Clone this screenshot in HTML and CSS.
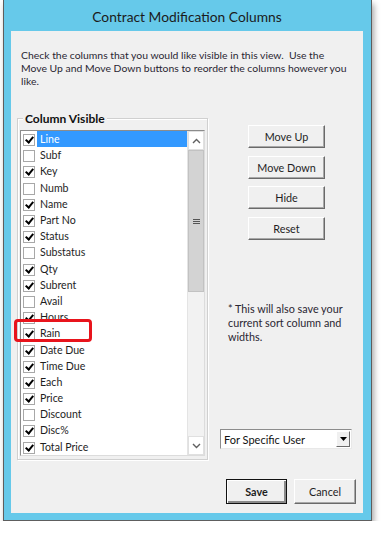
FILE: index.html
```html
<!DOCTYPE html>
<html>
<head>
<title>Contract Modification Columns</title>
<link rel="stylesheet" href="styles.css">
</head>
<body>
<div class="window">
  <div class="titlebar">Contract Modification Columns</div>
  <div class="content">
    <p class="desc">Check the columns that you would like visible in this view.&nbsp; Use the<br>Move Up and Move Down buttons to reorder the columns however you<br>like.</p>
    <div class="main">
      <div class="group">
        <span class="group-title">Column Visible</span>
        <div class="listbox">
          <div class="rows">
            <div class="row"><span class="cb on"></span><span class="label selected">Line</span></div>
            <div class="row"><span class="cb"></span><span class="label">Subf</span></div>
            <div class="row"><span class="cb on"></span><span class="label">Key</span></div>
            <div class="row"><span class="cb"></span><span class="label">Numb</span></div>
            <div class="row"><span class="cb on"></span><span class="label">Name</span></div>
            <div class="row"><span class="cb on"></span><span class="label">Part No</span></div>
            <div class="row"><span class="cb on"></span><span class="label">Status</span></div>
            <div class="row"><span class="cb"></span><span class="label">Substatus</span></div>
            <div class="row"><span class="cb on"></span><span class="label">Qty</span></div>
            <div class="row"><span class="cb on"></span><span class="label">Subrent</span></div>
            <div class="row"><span class="cb"></span><span class="label">Avail</span></div>
            <div class="row"><span class="cb on"></span><span class="label">Hours</span></div>
            <div class="row marked"><span class="cb on"></span><span class="label">Rain</span></div>
            <div class="row"><span class="cb on"></span><span class="label">Date Due</span></div>
            <div class="row"><span class="cb on"></span><span class="label">Time Due</span></div>
            <div class="row"><span class="cb on"></span><span class="label">Each</span></div>
            <div class="row"><span class="cb on"></span><span class="label">Price</span></div>
            <div class="row"><span class="cb"></span><span class="label">Discount</span></div>
            <div class="row"><span class="cb on"></span><span class="label">Disc%</span></div>
            <div class="row"><span class="cb on"></span><span class="label">Total Price</span></div>
          </div>
          <div class="scrollbar">
            <div class="sb-btn">
              <svg width="9" height="6" viewBox="0 0 9 6"><path d="M1 5 L4.5 1.5 L8 5" fill="none" stroke="#606060" stroke-width="1.4"/></svg>
            </div>
            <div class="sb-thumb">
              <svg width="7" height="7" viewBox="0 0 7 7" shape-rendering="crispEdges"><path d="M0 1.5h7M0 3.5h7M0 5.5h7" stroke="#555" stroke-width="1"/></svg>
            </div>
            <div class="sb-track"></div>
            <div class="sb-btn">
              <svg width="9" height="6" viewBox="0 0 9 6"><path d="M1 1 L4.5 4.5 L8 1" fill="none" stroke="#606060" stroke-width="1.4"/></svg>
            </div>
          </div>
        </div>
      </div>
      <div class="side">
        <div class="buttons">
          <button class="button">Move Up</button>
          <button class="button">Move Down</button>
          <button class="button">Hide</button>
          <button class="button">Reset</button>
        </div>
        <p class="note">* This will also save your<br>current sort column and<br>widths.</p>
        <div class="combo">
          <span class="combo-text">For Specific User</span>
          <span class="combo-btn">
            <svg width="7" height="4" viewBox="0 0 7 4"><path d="M0 0h7L3.5 4z" fill="#000"/></svg>
          </span>
        </div>
      </div>
    </div>
    <div class="footer">
      <button class="button default">Save</button>
      <button class="button">Cancel</button>
    </div>
  </div>
</div>
</body>
</html>
```

FILE: styles.css
```css
body {
  margin: 0;
  padding: 0;
  background-color: white;
  font-family: Lato, "Open Sans", sans-serif;
  font-size: 10.6px;
  color: #1e1e1e;
}

.window {
  margin-left: 3px;
  width: 352px;
  padding: 0 8px 7px 7px;
  background-color: #66c9ea;
  border: 1px solid #5e5e5e;
  border-top: none;
  box-shadow: 2px 4px 6px rgba(0, 0, 0, 0.35);
}

.titlebar {
  height: 31px;
  line-height: 34px;
  text-align: center;
  font-size: 13.8px;
  color: #1b1b1b;
}

.content {
  height: 482px;
  background-color: #f0f0f0;
  display: flex;
  flex-direction: column;
}

.desc {
  margin: 18px 0 0 10px;
  font-size: 10.4px;
  line-height: 13px;
  color: #2a2632;
  white-space: nowrap;
}

.main {
  margin-top: 30px;
  height: 342px;
  display: flex;
}

.group {
  margin-left: 6px;
  width: 189px;
  height: 340px;
  border: 1px solid #d0d0d0;
  box-shadow: inset 1px 1px 0 white, 1px 1px 0 white;
  display: flex;
  flex-direction: column;
}

.group-title {
  align-self: flex-start;
  margin: -8px 0 0 5px;
  padding: 0 2px;
  height: 16px;
  line-height: 16px;
  background-color: #f0f0f0;
  font-weight: bold;
  font-size: 12px;
  color: #111;
}

.listbox {
  margin: 3px 0 0 2px;
  width: 183px;
  height: 324px;
  border: 1px solid #8c8c8c;
  border-right-color: #dcdcdc;
  border-bottom-color: #dcdcdc;
  background-color: white;
  display: flex;
}

.rows {
  flex: 1;
}

.row {
  height: 16.2px;
  display: flex;
  align-items: center;
}

.cb {
  position: relative;
  margin: 2px 0 0 2px;
  width: 10px;
  height: 10px;
  border: 1px solid #a8a8a8;
  background-color: white;
  flex: none;
}

.cb.on::after {
  content: "";
  position: absolute;
  left: 3px;
  top: 0px;
  width: 3px;
  height: 6px;
  border: solid #000;
  border-width: 0 2px 2px 0;
  transform: rotate(40deg);
}

.label {
  margin-left: 2px;
  padding-left: 3px;
  flex: 1;
  height: 16px;
  line-height: 16px;
  color: #1e1e1e;
}

.label.selected {
  background-color: #3399ff;
  color: white;
}

.row.marked {
  position: relative;
}

.row.marked::after {
  content: "";
  position: absolute;
  left: -7px;
  top: -6px;
  width: 72px;
  height: 17px;
  border: 3px solid #e8141c;
  border-radius: 4px;
}

.scrollbar {
  width: 16px;
  display: flex;
  flex-direction: column;
  background-color: #f2f2f2;
  border-left: 1px solid #e4e4e4;
}

.sb-btn {
  height: 17px;
  background-color: white;
  border: 1px solid #e0e0e0;
  display: flex;
  align-items: center;
  justify-content: center;
}

.sb-thumb {
  height: 140px;
  background-color: #d3d3d3;
  border: 1px solid #c2c2c2;
  display: flex;
  align-items: center;
  justify-content: center;
}

.sb-track {
  flex: 1;
}

.side {
  display: flex;
  flex-direction: column;
}

.buttons {
  margin: 7px 0 0 40px;
  display: flex;
  flex-direction: column;
  gap: 7.5px;
}

.button {
  width: 77px;
  height: 23px;
  padding: 0;
  font-family: Lato, "Open Sans", sans-serif;
  font-size: 10.8px;
  color: #1e1e1e;
  background-color: #f0f0f0;
  border: 1px solid;
  border-color: #ffffff #6a6a6a #6a6a6a #ffffff;
  box-shadow: inset -1px -1px 0 #a8a8a8;
}

.note {
  margin: 62px 0 0 20px;
  font-size: 10.8px;
  line-height: 14px;
  color: #2a2632;
  white-space: nowrap;
}

.combo {
  margin: auto 0 11px 12px;
  width: 130px;
  height: 18px;
  border: 1px solid;
  border-color: #8c8c8c #e8e8e8 #e8e8e8 #8c8c8c;
  background-color: white;
  display: flex;
  align-items: center;
}

.combo-text {
  flex: 1;
  padding-left: 3px;
  font-size: 11px;
  color: #111;
}

.combo-btn {
  margin-right: 1px;
  width: 14px;
  height: 16px;
  background-color: #f0f0f0;
  border: 1px solid;
  border-color: #ffffff #6a6a6a #6a6a6a #ffffff;
  box-sizing: border-box;
  display: flex;
  align-items: center;
  justify-content: center;
}

.footer {
  margin-top: 19px;
  display: flex;
  justify-content: flex-end;
  gap: 7px;
  padding-right: 7px;
}

.footer .button {
  width: 62px;
  height: 25px;
}

.footer .button.default {
  width: 61px;
  font-weight: bold;
  border: 1px solid #111;
  box-shadow: inset 1px 1px 0 white, inset -2px -2px 0 #8a8a8a;
}
```
